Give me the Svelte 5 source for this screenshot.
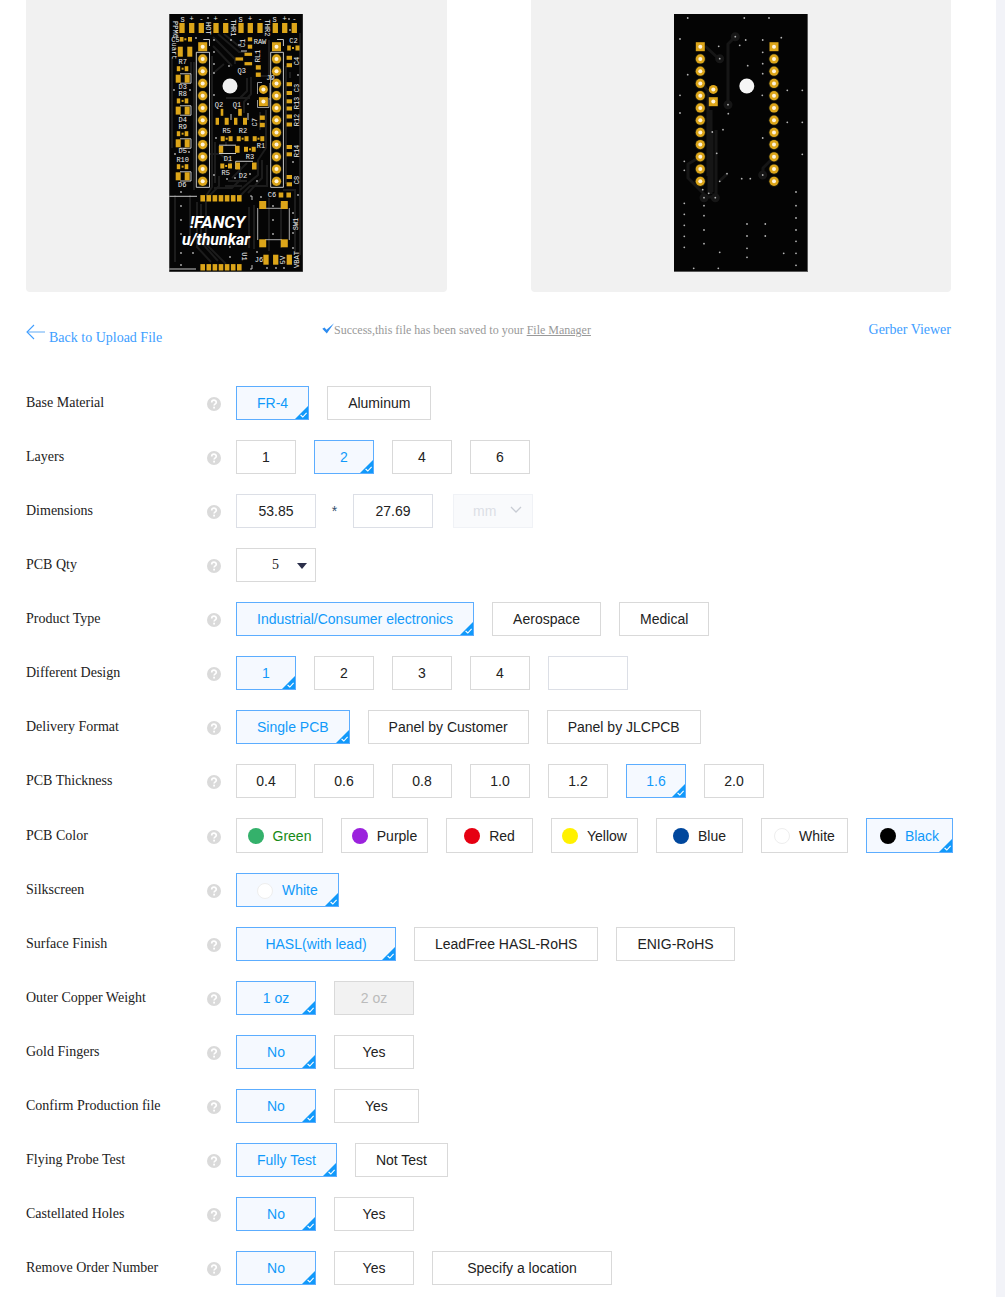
<script>
  const rows = [
    { label: 'Base Material', kind: 'fit', options: ['FR-4', 'Aluminum'], value: 'FR-4' },
    { label: 'Layers', kind: 'short', options: ['1', '2', '4', '6'], value: '2' },
    { label: 'Dimensions', kind: 'size' },
    { label: 'PCB Qty', kind: 'qty' },
    { label: 'Product Type', kind: 'fit', options: ['Industrial/Consumer electronics', 'Aerospace', 'Medical'], value: 'Industrial/Consumer electronics' },
    { label: 'Different Design', kind: 'short', options: ['1', '2', '3', '4'], value: '1', custom: true },
    { label: 'Delivery Format', kind: 'fit', options: ['Single PCB', 'Panel by Customer', 'Panel by JLCPCB'], value: 'Single PCB' },
    { label: 'PCB Thickness', kind: 'short', options: ['0.4', '0.6', '0.8', '1.0', '1.2', '1.6', '2.0'], value: '1.6' },
    { label: 'PCB Color', kind: 'color', options: ['Green', 'Purple', 'Red', 'Yellow', 'Blue', 'White', 'Black'], value: 'Black' },
    { label: 'Silkscreen', kind: 'fit', swatches: true, options: ['White'], value: 'White' },
    { label: 'Surface Finish', kind: 'finish', options: ['HASL(with lead)', 'LeadFree HASL-RoHS', 'ENIG-RoHS'], value: 'HASL(with lead)' },
    { label: 'Outer Copper Weight', kind: 'mid', options: ['1 oz', '2 oz'], value: '1 oz', disabled: '2 oz' },
    { label: 'Gold Fingers', kind: 'mid', options: ['No', 'Yes'], value: 'No' },
    { label: 'Confirm Production file', kind: 'confirm', options: ['No', 'Yes'], value: 'No' },
    { label: 'Flying Probe Test', kind: 'fit', options: ['Fully Test', 'Not Test'], value: 'Fully Test' },
    { label: 'Castellated Holes', kind: 'mid', options: ['No', 'Yes'], value: 'No' },
    { label: 'Remove Order Number', kind: 'mid', options: ['No', 'Yes', 'Specify a location'], value: 'No' }
  ];

  let chosen = $state(Object.fromEntries(rows.filter((r) => r.options).map((r) => [r.label, r.value])));

  const pins = Array.from({ length: 12 }, (_, i) => 46.7 + i * 12.24);

  // pads are [centre x, centre y, width, height]
  const pads = [
    ...[182, 191.7, 201.3, 216, 225.7, 241, 250.3, 260, 275.3, 284.7, 294.3].map((x) => [x, 28, 5.3, 10]),
    [181.7, 39.3, 3.6, 4.6], [185.4, 39.3, 2, 2], [190, 39.3, 4, 4.6],
    [180.3, 51.7, 5, 10], [189.8, 51.7, 5, 10],
    ...[68.7, 100.9, 133.7, 166.7].flatMap((y) => [[178.5, y, 3.4, 5], [186.5, y, 3.6, 5], [182.6, y, 2, 2]]),
    ...[78.7, 110.6, 143.3, 176.3].flatMap((y) => [[178.2, y, 5, 8], [187.2, y, 5, 8]]),
    [289, 48, 3.6, 5], [297.5, 48, 4, 5], [293, 48, 2, 2],
    ...[57.8, 65.2, 84.2, 93, 101.3, 108.5, 116.5, 124.5, 147, 154.3, 177, 184.3].map((y) => [289.3, y, 5.4, 4]),
    [281, 195, 4.6, 5], [288.7, 195, 4.6, 5],
    [262.7, 205, 7, 8], [284.3, 205, 7, 8], [262.7, 243.3, 7, 8], [284.3, 243.3, 7, 8],
    [266, 259.7, 5.3, 10], [275.7, 259.7, 5.3, 10], [289.3, 259.7, 5.3, 10],
    ...[0, 1, 2, 3, 4, 5, 6].flatMap((i) => [[202.7 + i * 6.1, 198.3, 4.6, 6.4], [202.7 + i * 6.1, 267.3, 4.6, 6.4]]),
    [250, 39.3, 4.4, 4], [250, 46.7, 4.4, 4],
    [248.3, 54.3, 7.6, 3.2], [239.3, 59, 7.6, 3.2], [248.3, 63.7, 7.6, 3.2],
    [258.3, 67.4, 5, 4.4], [258.3, 74.7, 5, 4.4],
    [222, 112.3, 2.6, 7], [240, 112.3, 3.6, 7],
    [217.3, 121.3, 3.4, 7], [226.7, 121.3, 4, 7], [235.7, 121.3, 3.4, 7], [245, 121.3, 4, 7],
    [262.3, 117.7, 5, 4.4], [262.3, 125, 5, 4.4],
    ...[222.7, 230.6, 238.7, 246.5, 254.7, 262.3].map((x) => [x, 138.7, 4, 5]),
    [226.7, 138.7, 2, 2], [242.6, 138.7, 2, 2], [258.5, 138.7, 2, 2],
    [221, 149.3, 4.4, 7], [237.3, 149.3, 4.6, 7], [246, 149.3, 4, 5], [253.7, 149.3, 4, 5], [250, 149.3, 2, 2],
    [222.3, 166, 4, 5], [230, 166, 4, 5], [226.2, 166, 2, 2], [237.7, 166, 4.6, 7], [254.3, 166, 4.6, 7]
  ];

  // silkscreen marks are [text, centre x, centre y, rotation]
  const marks = [
    ['S', 182.7, 19.3, 0], ['+', 191.5, 19, 0], ['-', 201.3, 19, 0], ['+', 215.7, 19, 0], ['-', 226, 19, 0],
    ['S', 240.7, 19.3, 0], ['+', 250, 19, 0], ['-', 260, 19, 0], ['S', 274.7, 19.3, 0], ['+', 284.5, 19, 0], ['-', 294.3, 19, 0],
    ['PPM6', 175.3, 29.5, 90], ['uart', 174.5, 51, 90], ['HOT', 208.7, 28.3, 90], ['THR1', 233.3, 28, 90], ['THR2', 267.3, 28, 90],
    ['C5', 175.5, 40, 0], ['R7', 182.7, 61.5, 0], ['D3', 182.7, 86.5, 0], ['R8', 182.7, 93.6, 0], ['D4', 182.7, 119.4, 0], ['R9', 182.7, 127, 0],
    ['D5', 182.7, 151, 0], ['R10', 182.7, 159.5, 0], ['D6', 182.3, 185, 0],
    ['RAW', 260, 41.5, 0], ['C1', 242.7, 43, 270], ['Q3', 241.7, 70.3, 0], ['RL1', 257.7, 56, 270], ['J9', 270.5, 77.3, 0],
    ['Q2', 219, 104.3, 0], ['Q1', 237, 104.3, 0], ['C7', 255, 122.3, 270], ['R5', 226.7, 131, 0], ['R2', 243, 131, 0],
    ['R1', 261, 146, 0], ['D1', 228, 158.7, 0], ['R3', 250, 156.5, 0], ['R5', 225.7, 172.7, 0], ['D2', 243, 175.3, 0],
    ['C2', 293.5, 40.5, 0], ['C4', 296.7, 61, 270], ['C3', 297, 88, 270], ['R13', 297, 103, 270], ['R12', 297, 120, 270],
    ['R14', 297, 151, 270], ['C8', 297, 180, 270], ['C6', 272, 195, 0], ['SW1', 296, 224, 270],
    ['VBAT', 296.5, 259.5, 270], ['5V', 283, 260, 270], ['J6', 259, 259.3, 0], ['U1', 244, 256.5, 90]
  ];

  const frontVias = [
    [214, 40], [214, 52], [214, 64], [214, 73], [214, 95], [229, 66], [196, 38], [239, 45], [248, 104], [216, 138], [214, 175], [227, 179], [235, 178],
    [257, 181], [250, 174], [174, 90], [190, 90], [175, 154], [189, 152], [181, 192], [181, 206], [181, 220], [181, 234], [181, 253], [181, 265], [193, 253],
    [230, 257], [230, 247], [298, 75], [290, 30], [293, 162], [293, 213], [293, 233], [273, 206], [273, 220], [273, 234], [261, 197], [289, 19],
    [257, 252], [267, 268], [276, 268], [284, 268], [208, 18], [231, 40], [293, 248], [298, 195]
  ];
  const backVias = [
    [686.7, 18], [743.3, 18], [768, 18], [679, 39], [717.7, 46.3], [718.7, 58.7], [734.3, 36.7], [744.7, 40], [738.7, 45.3], [761.7, 40], [780.3, 37.7],
    [761.7, 52.3], [761.7, 63.7], [761.7, 73.7], [746.7, 65.7], [686.7, 74.7], [679, 95.3], [679, 113], [761.3, 95.3], [786.3, 90.3], [801.3, 90.3],
    [786.3, 122.3], [801.3, 122.3], [727, 104.7], [727.3, 113.7], [722, 129.7], [711.3, 132], [761.7, 138], [683.3, 161.3], [683.3, 170.3], [715.7, 153.3],
    [726, 173.7], [718.7, 181.3], [740.7, 178.7], [749.3, 178.7], [761.7, 175], [801.3, 154.3], [701.7, 189.7], [707.7, 193.3], [703, 197.7], [714.3, 197.7],
    [683.3, 203.3], [683.3, 214.3], [683.3, 225.3], [683.3, 236.3], [683.3, 247.3], [703, 205.7], [703, 215.7], [703, 230], [703, 243.7],
    [746, 224], [746, 236], [746, 248.3], [746, 257.3], [764.3, 224], [764.3, 236], [718.7, 252.3], [692.7, 268.3], [717.3, 268.3], [782.7, 253.3],
    [795, 192], [795, 205.7], [795, 218], [795, 230], [795, 241.3], [795, 253.3], [795, 265.3]
  ];
</script>

{#snippet pinRow(x)}
  {#each pins as y, i}
    {#if i === 0}
      <rect class="gold" x={x - 4.5} y={y - 4.5} width="9" height="9" />
    {:else}
      <circle class="halo" cx={x} cy={y} r="5.4" />
      <circle class="gold" cx={x} cy={y} r="4.6" />
    {/if}
    <circle class="hole" cx={x} cy={y} r="2" />
  {/each}
{/snippet}

{#snippet jumper(x)}
  <circle class="gold" cx={x} cy="89.4" r="4.5" />
  <circle class="hole" cx={x} cy="89.4" r="2" />
  <rect class="gold" x={x - 4.5} y="97.2" width="9" height="9" />
  <circle class="hole" cx={x} cy="101.6" r="2" />
{/snippet}

{#snippet option(row, text)}
  <button
    type="button"
    class="option"
    class:green={text === 'Green'}
    class:selected={chosen[row.label] === text}
    class:wide={text === 'Specify a location'}
    disabled={row.disabled === text}
    aria-pressed={chosen[row.label] === text}
    onclick={() => (chosen[row.label] = text)}
  >
    {#if row.kind === 'color' || row.swatches}<span class="swatch {text.toLowerCase()}"></span>{/if}
    <span>{text}</span>
    {#if chosen[row.label] === text}
      <svg class="tick" viewBox="0 0 13 13" aria-hidden="true">
        <path d="M13 0V13H0Z" fill="#1199fa" />
        <path d="M5.6 9L7.8 11L11.6 6.8" fill="none" stroke="#fff" stroke-width="1.1" />
      </svg>
    {/if}
  </button>
{/snippet}

<div class="page">
  <main>
    <section class="boards" aria-label="Board preview">
      <div class="board">
        <svg viewBox="169 14 134 258" role="img" aria-label="Front side">
          <rect x="169" y="14" width="134" height="258" fill="#050505" />
          <g class="trace">
            <path d="M213 37L235 59V64M218 34L239 52H246M224 34L241 48M213 46L232 66M251 77V94L244 102V113M247 78V91L240 98" />
            <path d="M212 56V187L206 196M215 142V183M219 176V186L209 196M266 110V148L258 160V175L240 190M262 160V178L248 193M267 165V186H250L240 196" />
            <path d="M194 62V190M191 62V74M172 58V148M286 66V184M290 72V78M300 33V255M206 200V244L226 264M201 204V242L218 261M197 202V247L211 262M190 195V245" />
            <path d="M228 181H247M225 186H242M281 203V248M254 205V249M249 207V248M175 195V262M269 198V251M226 142V146M232 178L247 163M260 130V112" />
            <path d="M240 166V180L232 188H214M283 190H295V252M269 40V76H258M211 75L224 64M226 98H250M210 154H220L232 164" />
          </g>
          <g class="silk">
            <path d="M196.3 52.3H209.5V187.3H196.3ZM270.7 52.3H283.4V187.3H270.7ZM203.3 39.5H209.5V46M277 39.5H283.4V46" />
            <path d="M257.5 94V82.5H262M257.5 100V107.5H269V98M270 83V100" stroke="#aaa" />
            <path d="M257.7 208V240M289.3 208V240M265 208.3H282M265 239.7H282" stroke="#bbb" />
            <path d="M169 196.3H197M169 269H196M250 196H252V200M250 269H252V265" />
            <path d="M219 145.2H236M219 153.5H236M235.7 161.3H253M235.7 161.3V169M241 51H247M248 113V120M231 114V120" />
            <path d="M180 73.8H191V83.2H180M180 105.8H191V115.2H180M180 138.8H191V148.2H180M180 171.8H191V181H180" />
          </g>
          {#each pads as [x, y, w, h]}
            <rect class="gold" x={x - w / 2} y={y - h / 2} width={w} height={h} />
          {/each}
          {@render pinRow(202.7)}
          {@render pinRow(276.5)}
          {@render jumper(263.4)}
          <circle cx="230" cy="86" r="7.5" fill="#f1f1f1" />
          {#each frontVias as [x, y]}<circle class="via" cx={x} cy={y} r="0.9" />{/each}
          {#each marks as [text, x, y, turn]}
            <text class="mark" x={x} y={y + 2.3} transform="rotate({turn} {x} {y})">{text}</text>
          {/each}
          <text class="name" x="217.5" y="228">!FANCY</text>
          <text class="author" x="216" y="244.5">u/thunkar</text>
          <path d="M169.3 14V272M303 14V272M169 271.8H303" fill="none" stroke="#777" stroke-width="0.7" />
        </svg>
      </div>
      <div class="board">
        <svg viewBox="673 14 134 258" role="img" aria-label="Back side">
          <rect x="673" y="14" width="134" height="258" fill="#040404" />
          <g class="backtrace">
            <path d="M704 46L718 59M734 37L727 44V105M703 86L707 91V176M711 132V192M715 130V197H703M718.7 181L726 174M699 157L687 164V178L703 194M773 157L762 168V175" />
            <path d="M709 110V194" stroke-width="5" />
            <circle cx="718.7" cy="58.7" r="3" /><circle cx="734.3" cy="36.7" r="3" /><circle cx="727" cy="104.7" r="3" />
            <circle cx="703" cy="197.7" r="3" /><circle cx="714.3" cy="197.7" r="3" /><circle cx="761.7" cy="175" r="3" />
          </g>
          {@render pinRow(699.3)}
          {@render pinRow(773)}
          {@render jumper(712.3)}
          <circle cx="745.8" cy="86" r="7.5" fill="#f6f6f6" />
          {#each backVias as [x, y]}<circle class="via" cx={x} cy={y} r="0.9" />{/each}
          <path d="M806.7 14V271.7H673" fill="none" stroke="#888" stroke-width="0.8" />
        </svg>
      </div>
    </section>

    <nav class="links">
      <a class="back" href="#upload">
        <svg viewBox="0 0 20 16" aria-hidden="true">
          <path d="M1 8H19" stroke="#8fc3f8" stroke-width="1.4" />
          <path d="M8 1L1 8L8 15" fill="none" stroke="#409eff" stroke-width="1.1" />
        </svg>
        <span>Back to Upload File</span>
      </a>
      <p>
        <svg viewBox="0 0 12 11" aria-hidden="true"><path d="M0.3 5.8L2.5 4.6L4.5 6.8L12 0.2L4.8 10.6Z" fill="#2d8cf0" /></svg><span>Success,this file has been saved to your <a href="#files">File Manager</a></span>
      </p>
      <a class="viewer" href="#viewer">Gerber Viewer</a>
    </nav>

    <form>
      {#each rows as row, n}
        <div class="row" role="group" aria-labelledby="label-{n}">
          <span class="label" id="label-{n}">{row.label}</span>
          <svg class="help" viewBox="0 0 14 14" aria-hidden="true">
            <circle cx="7" cy="7" r="7" fill="#dadada" />
            <path d="M4.7 5.4C4.7 2.5 9.3 2.5 9.3 5.3C9.3 6.9 7.1 6.9 7.1 8.6" fill="none" stroke="#fff" stroke-width="1.7" />
            <rect x="6.2" y="9.7" width="1.8" height="1.8" fill="#fff" />
          </svg>
          <div class="choices {row.kind}">
            {#if row.kind === 'size'}
              <input aria-label="Length" value="53.85" />
              <span class="times">*</span>
              <input aria-label="Width" value="27.69" />
              <span class="picker unit">
                <select aria-label="Unit" disabled><option>mm</option></select>
                <svg viewBox="0 0 12 8" aria-hidden="true"><path d="M1 1L6 6L11 1" fill="none" stroke="#c8ccd4" stroke-width="1.3" /></svg>
              </span>
            {:else if row.kind === 'qty'}
              <span class="picker">
                <select aria-label="PCB Qty"><option>5</option><option>10</option><option>15</option></select>
                <svg viewBox="0 0 12 8" aria-hidden="true"><path d="M1 1H11L6 7Z" fill="#2b2f4a" /></svg>
              </span>
            {:else}
              {#each row.options as text}{@render option(row, text)}{/each}
              {#if row.custom}<input aria-label="Other number of designs" />{/if}
            {/if}
          </div>
        </div>
      {/each}
    </form>
  </main>
</div>

<style>
  :global(body) {
    background: #f2f3f8;
  }
  .page {
    padding-right: 9px;
    font: 14px/20px 'Liberation Serif', serif;
    color: #222;
  }
  main {
    background: #fff;
    padding: 0 45px 12px 26px;
  }
  .boards {
    display: grid;
    grid-template-columns: 1fr 1fr;
    gap: 84px;
  }
  .board {
    display: flex;
    justify-content: center;
    padding: 14px 0 20px;
    background: #f1f1f1;
    border-radius: 0 0 4px 4px;
  }
  .board svg {
    width: 134px;
    height: 258px;
  }
  .gold { fill: #dca519; }
  .hole { fill: #fff4dc; }
  .halo { fill: #22200f; }
  .via { fill: #b5b5b5; }
  .trace { fill: none; stroke: #1c1c1c; stroke-width: 2; }
  .backtrace { fill: #161616; stroke: #161616; stroke-width: 3; }
  .backtrace path { fill: none; }
  .silk { fill: none; stroke: #ddd; stroke-width: 0.9; }
  .mark {
    font: 7px 'Liberation Mono', monospace;
    fill: #eee;
    text-anchor: middle;
  }
  .name, .author {
    font: italic bold 17px Roboto, sans-serif;
    fill: #fff;
    text-anchor: middle;
  }
  .author {
    font-size: 16px;
  }
  .links {
    display: grid;
    grid-template-columns: 296px 1fr auto;
    padding: 27px 0 38px;
  }
  .links a {
    color: #409eff;
    text-decoration: none;
  }
  .back {
    display: flex;
    gap: 3px;
    padding-top: 5px;
  }
  .back svg {
    width: 20px;
    height: 16px;
  }
  .back span {
    padding-top: 4px;
  }
  .viewer {
    padding-top: 1px;
  }
  p {
    display: flex;
    margin: 0;
    font-size: 12px;
    line-height: 22px;
    color: #999;
  }
  p svg {
    width: 12px;
    height: 11px;
    margin-top: 4px;
  }
  .links p a {
    color: #999;
    text-decoration: underline;
  }
  form {
    display: grid;
    gap: 20px;
  }
  .row {
    display: grid;
    grid-template-columns: 181px 14px 1fr;
    align-items: center;
  }
  .help {
    width: 14px;
    height: 14px;
    margin-top: 2px;
  }
  .choices {
    display: flex;
    gap: 18px;
    padding-left: 15px;
    min-width: 0;
  }
  .option, input, select {
    box-sizing: border-box;
    height: 34px;
    border: 1px solid #d9d9d9;
    border-radius: 0;
    background: #fff;
    color: #222;
    font: 14px/20px 'Liberation Sans', sans-serif;
  }
  .option {
    position: relative;
    display: flex;
    flex: none;
    align-items: center;
    justify-content: center;
    padding: 0 20px;
    white-space: nowrap;
  }
  .option.green {
    color: #168a16;
  }
  .option.selected {
    border-color: #5cadff;
    background: #f5f9ff;
    color: #1199fa;
  }
  .option:disabled {
    background: #f2f2f2;
    color: #bbb;
  }
  .tick {
    position: absolute;
    right: 0;
    bottom: 0;
    width: 13px;
    height: 13px;
  }
  .short .option {
    width: 60px;
  }
  .mid .option {
    min-width: 80px;
  }
  .mid .option.wide {
    min-width: 180px;
  }
  .finish .option:first-child {
    min-width: 160px;
  }
  .confirm .option {
    padding: 0 30px;
  }
  .color .option {
    width: 87px;
    height: 35px;
    padding: 0;
  }
  .swatch {
    box-sizing: border-box;
    width: 16px;
    height: 16px;
    margin: 1px 9px 0 0;
    border-radius: 50%;
    background: #fff;
  }
  .swatch.green { background: #34b16b; }
  .swatch.purple { background: #9b22dd; }
  .swatch.red { background: #e60012; }
  .swatch.yellow { background: #fff100; }
  .swatch.blue { background: #00479d; }
  .swatch.white { border: 1px solid #eee; }
  .swatch.black { background: #000; }
  input {
    width: 80px;
    padding: 0;
    border-color: #dcdfe6;
    text-align: center;
  }
  .choices.size {
    gap: 0;
  }
  .times {
    width: 37px;
    font-family: 'Liberation Sans', sans-serif;
    line-height: 34px;
    text-align: center;
    color: #34506e;
  }
  .picker {
    position: relative;
    width: 80px;
  }
  .unit {
    margin-left: 20px;
  }
  select {
    appearance: none;
    width: 80px;
    padding: 0 0 0 35px;
    font-family: 'Liberation Serif', serif;
  }
  .unit select {
    padding-left: 19px;
    border-color: #f0f2f6;
    background: #f9fafc;
    color: #dcdfe6;
    font-family: 'Liberation Sans', sans-serif;
    opacity: 1;
  }
  .picker svg {
    position: absolute;
    right: 8px;
    top: 14px;
    width: 12px;
    height: 8px;
    pointer-events: none;
  }
  .unit svg {
    right: 11px;
    top: 12px;
  }
</style>
